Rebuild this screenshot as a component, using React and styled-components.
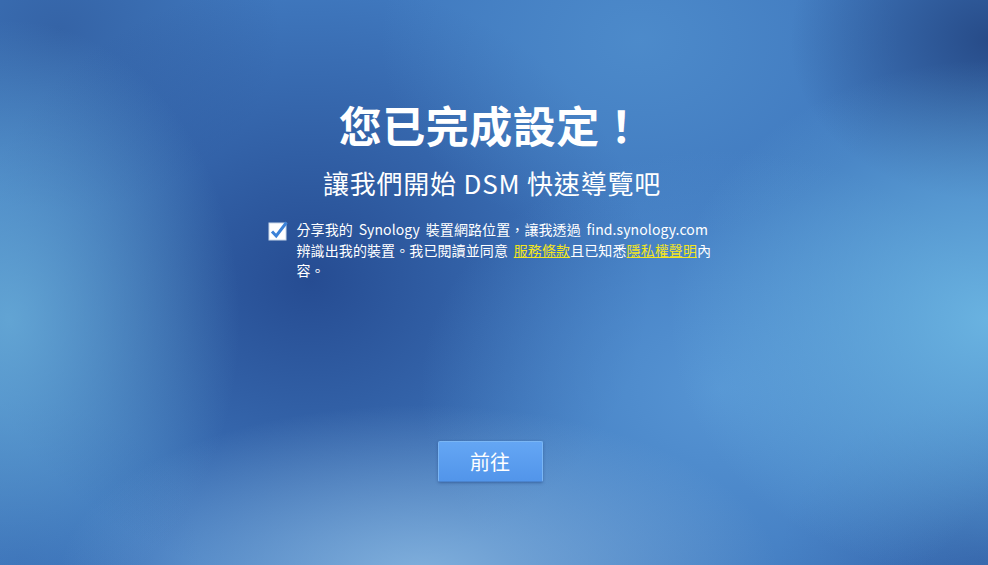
import React, { useState } from 'react';
import styled, { createGlobalStyle } from 'styled-components';

const GlobalStyle = createGlobalStyle`
  html, body {
    margin: 0;
    padding: 0;
    height: 100%;
    overflow: hidden;
  }
  #root {
    height: 100%;
  }
`;

const Page = styled.div`
  height: 100vh;
  box-sizing: border-box;
  display: flex;
  flex-direction: column;
  align-items: center;
  padding-top: 93px;
  color: #fff;
  font-family: "Noto Sans CJK TC", "Noto Sans", sans-serif;
  background:
    radial-gradient(ellipse 230px 300px at 10px 320px, rgba(110, 180, 220, 0.75), rgba(110, 180, 220, 0) 100%),
    radial-gradient(ellipse 320px 260px at 990px 320px, rgba(110, 185, 228, 0.9), rgba(110, 185, 228, 0) 100%),
    radial-gradient(ellipse 200px 160px at 990px 40px, rgba(36, 70, 130, 0.9), rgba(36, 70, 130, 0) 100%),
    radial-gradient(ellipse 360px 170px at 420px 575px, rgba(140, 185, 225, 0.85), rgba(140, 185, 225, 0) 100%),
    radial-gradient(ellipse 300px 240px at 720px 390px, rgba(95, 160, 220, 0.7), rgba(95, 160, 220, 0) 100%),
    radial-gradient(ellipse 260px 200px at 640px 40px, rgba(85, 150, 210, 0.6), rgba(85, 150, 210, 0) 100%),
    radial-gradient(ellipse 340px 300px at 310px 280px, rgba(38, 76, 146, 1), rgba(38, 76, 146, 0) 100%),
    radial-gradient(ellipse 220px 180px at 60px 30px, rgba(45, 85, 150, 0.6), rgba(45, 85, 150, 0) 100%),
    radial-gradient(ellipse 200px 160px at 980px 560px, rgba(50, 95, 165, 0.8), rgba(50, 95, 165, 0) 100%),
    radial-gradient(ellipse 180px 160px at 20px 560px, rgba(50, 100, 175, 0.6), rgba(50, 100, 175, 0) 100%),
    #4079bf;
`;

const Title = styled.h1`
  margin: 0 6px 0 0;
  font-size: 43px;
  font-weight: 700;
  line-height: 62px;
  letter-spacing: 0.5px;
`;

const Subtitle = styled.h2`
  margin: 10px 4px 0 0;
  font-size: 26px;
  font-weight: 400;
  line-height: 36px;
  letter-spacing: 0.8px;
`;

const AgreeRow = styled.label`
  display: flex;
  align-items: flex-start;
  gap: 9px;
  margin-top: 18px;
  margin-right: 8px;
  width: 445px;
  cursor: pointer;
`;

const CheckBox = styled.span`
  flex: none;
  width: 20px;
  height: 20px;
  margin-top: 2px;
`;

const AgreeText = styled.span`
  font-size: 14px;
  line-height: 20.5px;
  width: 416px;
  word-spacing: 2.5px;
  letter-spacing: 0.1px;
`;

const DocLink = styled.a`
  color: #f4e61c;
  text-decoration: underline;
  cursor: pointer;
`;

const Footer = styled.div`
  flex: 1;
  display: flex;
  align-items: flex-start;
  justify-content: center;
  padding-top: 160px;
  margin-right: 8px;
`;

const NextButton = styled.button`
  width: 105px;
  height: 41px;
  border: 1px solid #7ab6f5;
  border-bottom-color: #4a84cf;
  border-radius: 2px;
  background: linear-gradient(to bottom, #64a6f4, #5295ea);
  box-shadow: 0 1px 3px rgba(20, 50, 110, 0.45);
  color: #fff;
  font-family: "Noto Sans CJK TC", "Noto Sans", sans-serif;
  font-size: 20px;
  cursor: pointer;
`;

const CheckIcon = ({ checked }) => (
  <svg width="20" height="20" viewBox="0 0 20 20">
    <rect x="1" y="2" width="17" height="17" fill="#fff" stroke="#c9d8ea" strokeWidth="1" />
    {checked && (
      <path d="M4 10.5 L8.2 15 L18.5 1.5" fill="none" stroke="#3b82d8" strokeWidth="3" strokeLinejoin="miter" />
    )}
  </svg>
);

export default function App() {
  const [checked, setChecked] = useState(true);

  return (
    <>
      <GlobalStyle />
      <Page>
        <Title>您已完成設定！</Title>
        <Subtitle>讓我們開始 DSM 快速導覽吧</Subtitle>
        <AgreeRow onClick={() => setChecked(!checked)}>
          <CheckBox>
            <CheckIcon checked={checked} />
          </CheckBox>
          <AgreeText>
            分享我的 Synology 裝置網路位置，讓我透過 find.synology.com
            <br />
            辨識出我的裝置。我已閱讀並同意 <DocLink>服務條款</DocLink>且已知悉<DocLink>隱私權聲明</DocLink>內容。
          </AgreeText>
        </AgreeRow>
        <Footer>
          <NextButton>前往</NextButton>
        </Footer>
      </Page>
    </>
  );
}
